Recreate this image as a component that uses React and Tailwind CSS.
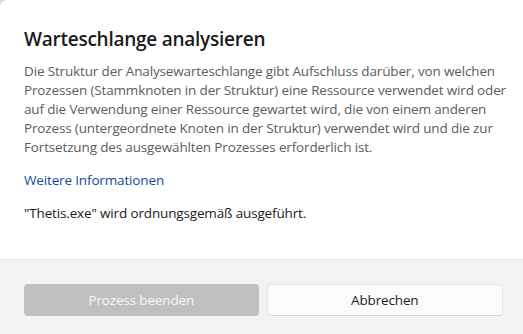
import React from "react";

export default function App() {
    const font = { fontFamily: '"Open Sans", "Noto Sans", sans-serif' };

    return (
        <div className="w-[523px] h-[334px] bg-[#d9d9d9] overflow-hidden" style={font}>
            <div className="w-full h-full bg-white rounded-tl-[7px] flex flex-col">
                {/* Inhalt */}
                <div className="flex-1 pl-6 pr-2 pt-[25px]">
                    <h1 className="text-[19px] leading-[28px] tracking-[-0.25px] font-semibold text-[#1b1b1b] whitespace-nowrap">
                        Warteschlange analysieren
                    </h1>
                    <p className="mt-[9px] text-[13.5px] leading-[19px] tracking-[-0.15px] text-[#5c5c5c] whitespace-nowrap">
                        Die Struktur der Analysewarteschlange gibt Aufschluss darüber, von welchen<br />
                        Prozessen (Stammknoten in der Struktur) eine Ressource verwendet wird oder<br />
                        auf die Verwendung einer Ressource gewartet wird, die von einem anderen<br />
                        Prozess (untergeordnete Knoten in der Struktur) verwendet wird und die zur<br />
                        Fortsetzung des ausgewählten Prozesses erforderlich ist.
                    </p>
                    <a href="#" className="block mt-[14px] text-[13.5px] leading-[19px] tracking-[-0.15px] text-[#0f4c9e] w-fit">
                        Weitere Informationen
                    </a>
                    <p className="mt-[14px] text-[13.5px] leading-[19px] tracking-[-0.15px] text-[#1b1b1b]">
                        "Thetis.exe" wird ordnungsgemäß ausgeführt.
                    </p>
                </div>

                {/* Fußzeile */}
                <div className="h-[75px] bg-[#f3f3f3] border-t border-[#e5e5e5] flex items-start gap-2 pl-6 pr-5 pt-6">
                    <button className="flex-1 h-8 rounded-[4px] bg-[#bfbfbf] text-[13.5px] tracking-[-0.15px] text-[#f7f7f7]">
                        Prozess beenden
                    </button>
                    <button className="flex-1 h-8 rounded-[4px] bg-[#fbfbfb] border border-[#e5e5e5] border-b-[#d6d6d6] text-[13.5px] tracking-[-0.15px] text-[#1b1b1b]">
                        Abbrechen
                    </button>
                </div>
            </div>
        </div>
    );
}
